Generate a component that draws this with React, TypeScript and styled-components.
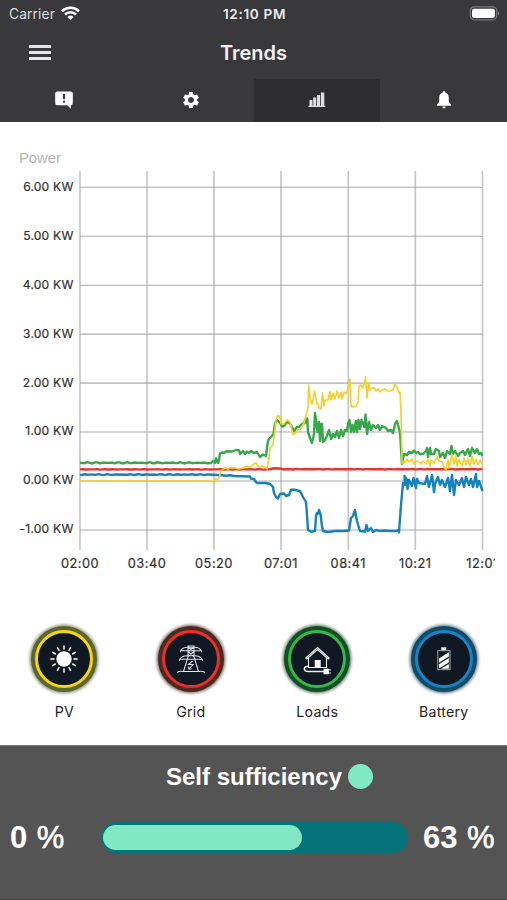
import React from "react";
import styled, { createGlobalStyle } from "styled-components";
import { MdSettings } from "react-icons/md";

const GlobalStyle = createGlobalStyle`
  * { box-sizing: border-box; }
  body { margin: 0; background: #fff; font-family: Inter, "Liberation Sans", sans-serif; }
`;

const Screen = styled.div`
  width: 507px;
  height: 900px;
  display: flex;
  flex-direction: column;
  overflow: hidden;
  background: #fff;
`;

const Header = styled.header`
  height: 122px;
  flex: none;
  background: #39393c;
  color: #fff;
`;

const StatusBar = styled.div`
  height: 27px;
  display: grid;
  grid-template-columns: 1fr auto 1fr;
  align-items: center;
  padding: 0 7px 0 9px;
  svg { display: block; }
`;

const Carrier = styled.div`
  display: flex;
  align-items: center;
  gap: 6px;
  font-size: 13.8px;
  color: #dcdcde;
  letter-spacing: 0.1px;
`;

const Clock = styled.div`
  font-size: 13.6px;
  font-weight: 600;
  letter-spacing: 0.65px;
  color: #ececee;
`;

const BatteryStatus = styled.div`
  justify-self: end;
`;

const TitleBar = styled.div`
  height: 52px;
  display: grid;
  grid-template-columns: 80px 1fr 80px;
  align-items: center;
`;

const MenuButton = styled.button`
  display: flex;
  flex-direction: column;
  gap: 3px;
  width: 22px;
  margin: -2px 0 0 29px;
  padding: 0;
  border: 0;
  background: none;
`;

const MenuLine = styled.span`
  width: 22px;
  height: 3px;
  background: #e6e6ea;
`;

const Title = styled.h1`
  margin: -1px 0 0;
  text-align: center;
  font-size: 20px;
  line-height: 24px;
  font-weight: 600;
  color: #f4f4f6;
`;

const Tabs = styled.nav`
  height: 43px;
  display: grid;
  grid-template-columns: repeat(4, 1fr);
`;

const Tab = styled.button<{ $active?: boolean }>`
  display: flex;
  align-items: center;
  justify-content: center;
  padding: 0 0 1px 1px;
  border: 0;
  color: #fff;
  background: ${(p) => (p.$active ? "#2e2e31" : "transparent")};
`;

const ChartSection = styled.section`
  height: 490px;
  flex: none;
  padding-top: 27px;
`;

const ChartLabel = styled.div`
  margin-left: 19px;
  height: 18px;
  font: 14.8px/18px "Liberation Sans", sans-serif;
  color: #b3b3b3;
`;

const ChartSvg = styled.svg`
  display: block;
  width: 495px;
  height: 424px;
  text { font-family: Inter, sans-serif; font-size: 12.1px; letter-spacing: 0.2px; fill: #303030; stroke: #303030; stroke-width: 0.2px; }
`;

const TimeLabels = styled.g`
  text { font-size: 12.8px; letter-spacing: 0.5px; }
`;

const Sources = styled.section`
  height: 133px;
  flex: none;
  display: grid;
  grid-template-columns: repeat(4, 1fr);
  padding: 11px 0 0 1px;
`;

const Source = styled.div`
  display: flex;
  flex-direction: column;
  align-items: center;
`;

const Ring = styled.div<{ $color: string; $halo: string }>`
  width: 58px;
  height: 58px;
  margin: 7px;
  display: grid;
  place-items: center;
  border-radius: 50%;
  border: 3px solid ${(p) => p.$color};
  background: #101824;
  box-shadow: 0 0 0 4px ${(p) => p.$halo}, 0 0 3px 5.5px ${(p) => p.$halo}aa;
`;

const SourceName = styled.div`
  margin-top: 8px;
  font-size: 14.2px;
  line-height: 18px;
  color: #242424;
  letter-spacing: 0.2px;
`;

const Summary = styled.footer`
  flex: 1;
  background: #545454;
  border-top: 1px solid #777;
  border-bottom: 1px solid #484848;
  color: #fff;
  font-family: "Liberation Sans", sans-serif;
  padding-top: 17px;
`;

const SummaryTitle = styled.div`
  height: 28px;
  display: flex;
  justify-content: center;
  align-items: center;
  gap: 6px;
  padding-left: 32px;
  font-size: 24px;
  font-weight: 700;
`;

const Dot = styled.span`
  width: 25px;
  height: 25px;
  margin-bottom: 2px;
  border-radius: 50%;
  background: #80e8c3;
`;

const Meter = styled.div`
  display: grid;
  grid-template-columns: 101px 307px 1fr;
  align-items: center;
  height: 32px;
  margin-top: 29px;
`;

const Percent = styled.div<{ $inset: number }>`
  padding: 2px 0 0 ${(p) => p.$inset}px;
  font-size: 31px;
  line-height: 32px;
  font-weight: 700;
  white-space: nowrap;
`;

const PercentSign = styled.span`
  margin-left: 1px;
  font-weight: 400;
  -webkit-text-stroke: 0.6px #fff;
`;

const Track = styled.div`
  height: 31px;
  padding: 3px 2px;
  border-radius: 16px;
  background: #04737a;
`;

const Fill = styled.div`
  width: 199px;
  height: 25px;
  border-radius: 13px;
  background: #80e8c3;
`;

const xTicks: [number, string][] = [
  [80, "02:00"], [147, "03:40"], [214, "05:20"], [281, "07:01"],
  [348.3, "08:41"], [415.3, "10:21"], [482.5, "12:01"],
];
const yTicks = [6, 5, 4, 3, 2, 1, 0, -1];
const yOf = (kw: number) => 481 - kw * 48.95;

// Small repeatable ripple for the quiet stretches of a series.
const quiet = (from: number, to: number, y: number, amp: number, seed: number) => {
  const pts: string[] = [];
  for (let x = from; x <= to; x += 2.5) {
    const n = Math.sin(x * 1.7 + seed) * 0.6 + Math.sin(x * 0.61 + seed * 2) * 0.4;
    pts.push(`${x.toFixed(1)},${(y + n * amp).toFixed(1)}`);
  }
  return pts.join(" ");
};

const load =
  quiet(80, 209, 462.8, 0.7, 1) +
  " 211,463 213,461 215,463 216,458.5 218,463 219,460 220,453.5 222,452.5 224,453 226,451.3 232,451.5 236,450 239,450.3 240,454 243,451 245,454 247,451.5 249,453 251,451 254,453 257,452 260,457 263,454.5 266,456 267.5,444 268.5,439.5 271,437 273.5,434 275,423.5 277,420 280,423 282,426.5 284,426 287,422 290,423.5 294,431 297,427 299,427 302,424 304,423.5 305,420 306.5,423 307.3,418.5 308,432 310,438 312,443 314,434 315,413 316.5,424 317.5,432 319,422 320,441 321,424 322,424 323,442 325,440 327,436 329,430 331,439 333,434 335,437 337,431 339,438 341,430 343,436 345,430 347,431 348,424 349.5,420 351,432 352.5,425 354,432 356,421 357,432 358.5,420 360,429 361.5,420 363,424 364.5,427 365.5,414.5 367,434 369,422 371,430 373,425 376,428 378,425 380,430 382,426 386,428 388,431 391,430 393,433 395,424 397,421 398,425 400,432 402,464 404,454 407,455 409,452 412,453 414,450.5 416,453 418,452 420,454 423,454 426,451 427,448 428,457 430,448 431,454 434,454 436,449 439,451 440,457 443,453 445,458 447,451 450,454 451.5,446 453,454 455,451 458,456 460,453 463,451 465,455 468,449 470,456 472,448 475,453 477,449 479,454 481,453 482.5,456";

const pv =
  "80,481 211,481 213,482 215,479 217,480 219,478 221,471 223,469.5 225,468 228,469 231,467.5 235,468 239,469 243,468 247,466 250,467 253,464.5 256,463 259,467 262,466 265,467 267,469 269,458 270,448 273,445 274,437 276,420 278,415.5 280,417 281,424 284,424 287,420 290,422 293,434.5 296,433 298,429.5 300,429.5 304,423 306,415 308,408 308.7,385 310,398 312,404 314.7,391 317,404 318,404 319,408 321,409 322.5,393 324,406 325,400 328,400 330,391.5 331,400 333,393 335,399 337,391 339,398 341,392 342,399 344,392 346,394 348,389 350,379 351,406 353,407 356,406 358,402 359,386 361,385 363,388 364.5,383 365.5,377 367,398 368.5,383 370,390 372,388 374,387.5 376,391 378,389 380,392 382,390 385,389 387,391 390,391 393,390 395,384 397,387 399,393 400,392 401,412 402,464 404,461 405,463 407,459 409,462 412,459 414,464 416,461 419,462 421,464 423,461 426,464 428,459 430,466 431,460 434,463 437,457 439,461 442,462 444,467 446,470 448,460 449,468 452,454 454,464 456,456 457,466 459,460 462,466 464,458 466,465 468,459 470,466 472,456 474,464 476,459 478,465 480,460 482.5,465";

const battery =
  quiet(80, 214, 474.6, 0.55, 4) +
  " 217,475 222,475.2 226,475.8 230,475.3 234,476 250,476.5 251,478.5 254,479 256,482 257,483 266,483 270,484 273,487 274,493 276,497 278,498.5 280,494 284,493.5 286,496 289,495 291,490 293,489.5 300,491 303,497 306,502 307,515 308,530 311,531.7 315,531 316,516 317,513 318,514 319,510 320.5,514 322,526 323,531 328,532 335,531 343,531 349,530.5 351,518 353,516 355,510 357,521 360,531 365,531.5 366.5,525 368,531 371,528 373,532 376,530 380,531 384,530.5 391,531 396,531 398,530 399,532.5 401,505 403,483 405,485 404.5,476 407,480 407.5,489 409,480 412,486 413.5,478 416,488 417,479 419,483 425,484 427,476 429,487 432,475 434,492 435,484 438,477 440,485 442,480 445,487 448,478 450,491 452,475 454,495 456,480 459,485 462,478 464,487 466,477 469,485 471,479 473,487 476,474 477,487 479,481 482.5,491";

const grid = quiet(80, 270, 469.4, 0.2, 2) + " 273,468.3 280,468.5 284,469.5 " + quiet(288, 482, 469.2, 0.3, 6) + " 482.5,469";

function PowerChart() {
  return (
    <ChartSvg viewBox="0 167 495 424">
      <g stroke="#ababab" strokeWidth="1.1">
        {yTicks.map((v) => <line key={v} x1="80" x2="482.5" y1={yOf(v)} y2={yOf(v)} />)}
      </g>
      <g stroke="#999999" strokeOpacity=".55" strokeWidth="1.7">
        {xTicks.map(([x]) => <line key={x} x1={x} x2={x} y1="171" y2="550" />)}
      </g>
      {yTicks.map((v) => (
        <text key={v} x="73.5" y={yOf(v) + 3.4} textAnchor="end">{v.toFixed(2)} KW</text>
      ))}
      <TimeLabels>
        {xTicks.map(([x, label]) => (
          <text key={label} x={x} y="568" textAnchor="middle">{label}</text>
        ))}
      </TimeLabels>
      <g fill="none" strokeLinejoin="round">
        <polyline points={battery} stroke="#1482bd" strokeWidth="2.4" />
        <polyline points={load} stroke="#35a947" strokeWidth="2.4" />
        <polyline points={grid} stroke="#e63432" strokeWidth="2.4" />
        <polyline points={pv} stroke="#f8cd29" strokeWidth="1.6" />
      </g>
    </ChartSvg>
  );
}

const WifiIcon = () => (
  <svg width="19" height="15" viewBox="0 0 19 15" fill="none" stroke="#fff" strokeWidth="2.6">
    <path d="M1 5.2a12.3 12.3 0 0 1 17 0M4 8.5a8 8 0 0 1 11 0" />
    <path d="M9.5 14.2 6.5 11a4.3 4.3 0 0 1 6 0Z" fill="#fff" stroke="none" />
  </svg>
);

const BatteryLevelIcon = () => (
  <svg width="31" height="15" viewBox="0 0 31 15">
    <rect x="1.3" y=".8" width="26.400" height="13" rx="4" fill="none" stroke="#77777a" strokeWidth="1.2" />
    <rect x="3" y="2.700" width="22.900" height="9.200" rx="2.200" fill="#fff" />
    <path d="M28.800 5c2 .8 2 3.800 0 4.600Z" fill="#77777a" />
  </svg>
);

const FeedbackIcon = () => (
  <svg width="18" height="18" viewBox="0 0 18 18" fill="#fff">
    <path fillRule="evenodd" d="M2.200.5h13.600a2 2 0 0 1 2 2v9.800a2 2 0 0 1-2 2V17.800L12.300 14.300H2.200a2 2 0 0 1-2-2V2.500a2 2 0 0 1 2-2ZM7.800 3l.3 5.200h1.800l.3-5.200ZM8 9.800v2h2v-2Z" />
  </svg>
);

const BarsIcon = () => (
  <svg width="18" height="16" viewBox="0 0 18 16" fill="#dfdfdf">
    <path d="M1.500 8h3v6h-3ZM5.200 5.500h3v8.500h-3ZM9 3h3.100v11H9ZM12.900.6h3.400V14h-3.400ZM.5 13.700H17.300V15H.5Z" />
  </svg>
);

const BellIcon = () => (
  <svg width="16" height="18" viewBox="0 0 16 18" fill="#fff">
    <path d="M8 .3c1 0 1.500.7 1.500 1.500 2.200.7 3.300 2.500 3.300 5v4l2.100 2.800v1.100H1.100v-1.100l2.100-2.800v-4c0-2.500 1.100-4.300 3.300-5C6.500.9 7 .3 8 .3ZM6.300 15.500h3.400c-.2 1.300-.8 1.900-1.700 1.900s-1.500-.6-1.700-1.900Z" />
  </svg>
);

const SunIcon = () => (
  <svg width="32" height="32" viewBox="-16 -16 32 32">
    <circle r="7.700" fill="#fff" />
    <g stroke="#fff" strokeWidth="1.500">
      {Array.from({ length: 12 }, (_, i) => (
        <line key={i} y1="-9.500" y2="-13.600" transform={`rotate(${i * 30})`} />
      ))}
    </g>
  </svg>
);

const PylonIcon = () => (
  <svg width="32" height="32" viewBox="0 0 32 32" fill="none" stroke="#dde3e8" strokeWidth="1.050">
    <path d="M12.500 3h7M13 3v11L8.500 28.500M19 3v11l4.500 14.500M13 8.300l6-4M13 4.300l6 4M13 13.500l6-5M13 8.500l6 5M2 29.500c2-1.300 4-1.500 6-1h16c2-.5 4-.3 6 1" />
    <path d="M5.500 9.200V8c1.300-2.600 4-3.700 7.500-3.700h6c3.500 0 6.200 1.100 7.500 3.700v1.200M6.500 7.800h19M4.500 18v-1.200c1.300-2.700 4-4 8-4h7c4 0 6.700 1.300 8 4V18M5.500 16.300h21" />
    <path d="m17.500 18-4 3.500h4.500l-4 4.500m-.3-2.500V26h2.800" />
  </svg>
);

const HouseIcon = () => (
  <svg width="31" height="31" viewBox="0 0 31 31" fill="none" stroke="#e9edf0" strokeWidth="1.100">
    <path d="m3.800 14 11.700-10.500L27.200 14l-1 1-10.700-9.500L4.800 15ZM6.500 13.800V23.500h18v-9.700" />
    <path d="M12.700 16h6v7.500h-6Z" fill="#fff" stroke="none" />
    <path d="M6.300 22.200c-5.300 0-5.300 5.300 0 5.300H22" strokeWidth="1.400" />
    <path d="M21.500 24.800H27v.6h1.800v1.200H27v1.800h1.800v1.200H27v.6h-5.500Z" fill="#fff" stroke="none" />
  </svg>
);

const BatteryIcon = () => (
  <svg width="30" height="32" viewBox="0 0 30 32">
    <rect x="12.300" y="4.300" width="5" height="3" fill="#fff" />
    <rect x="8.700" y="7.700" width="12.300" height="19" fill="none" stroke="#9ea5ab" strokeWidth="1" />
    <path d="M19.800 9.300v4.200L10 19.800v-4.200ZM19.800 15v4.500L10 25.600v-4.300ZM19.800 21v4.800h-8Z" fill="#fff" />
  </svg>
);

const sources = [
  { name: "PV", color: "#f3d51b", halo: "#5c6530", icon: <SunIcon /> },
  { name: "Grid", color: "#ed2d2a", halo: "#4b2a21", icon: <PylonIcon /> },
  { name: "Loads", color: "#35b84b", halo: "#154d25", icon: <HouseIcon /> },
  { name: "Battery", color: "#1486c5", halo: "#154a67", icon: <BatteryIcon /> },
];

export default function App() {
  return (
    <>
      <GlobalStyle />
      <Screen>
        <Header>
          <StatusBar>
            <Carrier>Carrier <WifiIcon /></Carrier>
            <Clock>12:10 PM</Clock>
            <BatteryStatus><BatteryLevelIcon /></BatteryStatus>
          </StatusBar>
          <TitleBar>
            <MenuButton aria-label="Menu"><MenuLine /><MenuLine /><MenuLine /></MenuButton>
            <Title>Trends</Title>
          </TitleBar>
          <Tabs>
            <Tab aria-label="Messages"><FeedbackIcon /></Tab>
            <Tab aria-label="Settings"><MdSettings size={20} /></Tab>
            <Tab aria-label="Trends" $active><BarsIcon /></Tab>
            <Tab aria-label="Alerts"><BellIcon /></Tab>
          </Tabs>
        </Header>
        <ChartSection>
          <ChartLabel>Power</ChartLabel>
          <PowerChart />
        </ChartSection>
        <Sources>
          {sources.map((s) => (
            <Source key={s.name}>
              <Ring $color={s.color} $halo={s.halo}>{s.icon}</Ring>
              <SourceName>{s.name}</SourceName>
            </Source>
          ))}
        </Sources>
        <Summary>
          <SummaryTitle>Self sufficiency<Dot /></SummaryTitle>
          <Meter>
            <Percent $inset={10}>0 <PercentSign>%</PercentSign></Percent>
            <Track><Fill /></Track>
            <Percent $inset={15}>63 <PercentSign>%</PercentSign></Percent>
          </Meter>
        </Summary>
      </Screen>
    </>
  );
}
